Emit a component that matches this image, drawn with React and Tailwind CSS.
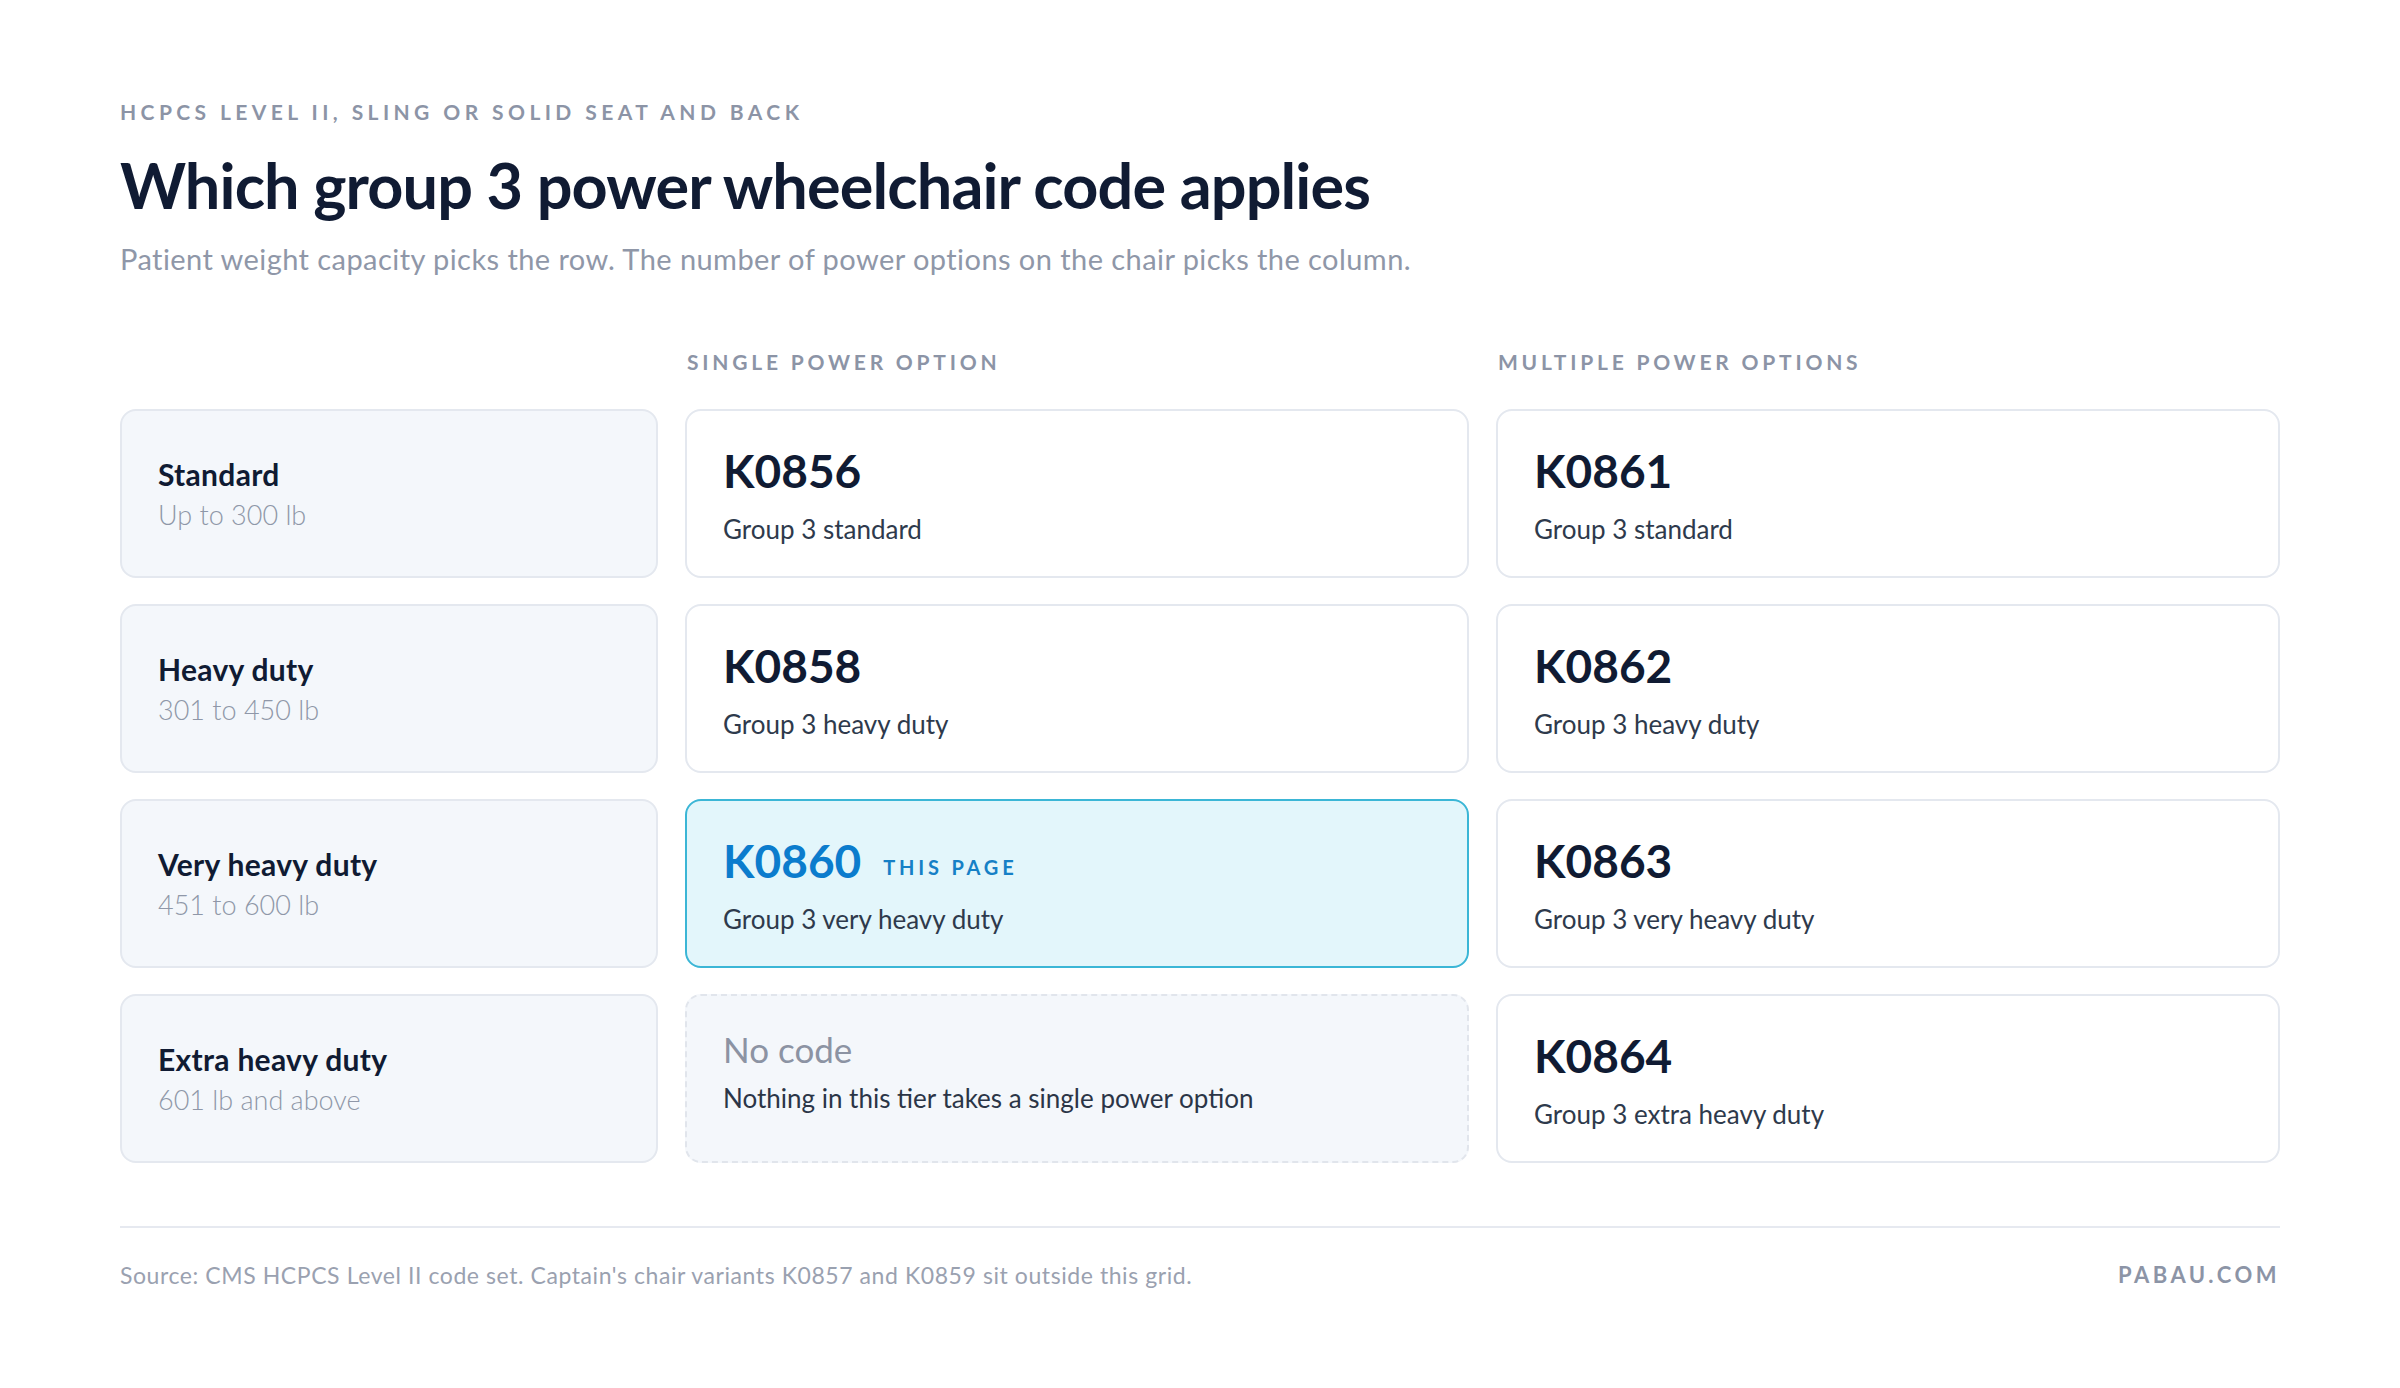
const rows = [
  {
    label: "Standard",
    range: "Up to 300 lb",
    single: { code: "K0856", desc: "Group 3 standard" },
    multi: { code: "K0861", desc: "Group 3 standard" },
  },
  {
    label: "Heavy duty",
    range: "301 to 450 lb",
    single: { code: "K0858", desc: "Group 3 heavy duty" },
    multi: { code: "K0862", desc: "Group 3 heavy duty" },
  },
  {
    label: "Very heavy duty",
    range: "451 to 600 lb",
    single: { code: "K0860", desc: "Group 3 very heavy duty", current: true },
    multi: { code: "K0863", desc: "Group 3 very heavy duty" },
  },
  {
    label: "Extra heavy duty",
    range: "601 lb and above",
    single: null,
    multi: { code: "K0864", desc: "Group 3 extra heavy duty" },
  },
];

const TierCard = ({ label, range }) => (
  <div className="h-[169px] rounded-[16px] border-2 border-[#e4e8ef] bg-[#f4f7fb] px-[36px] flex flex-col justify-center">
    <div className="text-[30px] leading-[36px] font-bold tracking-[0.01em] text-[#101b33]">{label}</div>
    <div className="mt-[6px] text-[27px] leading-[34px] text-[#8f97a8] font-light">{range}</div>
  </div>
);

const CodeCard = ({ item }) => {
  if (!item) {
    return (
      <div className="h-[169px] rounded-[16px] border-2 border-dashed border-[#e1e5ec] bg-[#f4f7fb] px-[36px] pb-[14px] flex flex-col justify-center">
        <div className="text-[35px] leading-[42px] text-[#8c93a3]">No code</div>
        <div className="mt-[11px] text-[26px] leading-[34px] text-[#2b3547]">
          Nothing in this tier takes a single power option
        </div>
      </div>
    );
  }

  if (item.current) {
    return (
      <div className="h-[169px] rounded-[16px] border-2 border-[#3bb6d6] bg-[#e3f6fb] px-[36px] pt-[4px] flex flex-col justify-center">
        <div className="flex items-baseline gap-[22px]">
          <span className="text-[46px] leading-[52px] font-bold text-[#0b7ccd]">{item.code}</span>
          <span className="-translate-y-[3px] text-[20px] font-bold tracking-[0.19em] text-[#1680c6]">THIS PAGE</span>
        </div>
        <div className="mt-[15px] text-[26px] leading-[34px] text-[#2e3a4c]">{item.desc}</div>
      </div>
    );
  }

  return (
    <div className="h-[169px] rounded-[16px] border-2 border-[#e4e8ef] bg-white px-[36px] pt-[4px] flex flex-col justify-center">
      <div className="text-[46px] leading-[52px] font-bold text-[#101b33]">{item.code}</div>
      <div className="mt-[15px] text-[26px] leading-[34px] text-[#2e3a4c]">{item.desc}</div>
    </div>
  );
};

export default function App() {
  return (
    <div
      className="min-h-[1388px] w-[2400px] bg-white px-[120px] pt-[100px]"
      style={{ fontFamily: "Lato, 'Noto Sans', sans-serif" }}
    >
      <div className="text-[21px] leading-[24px] font-bold tracking-[0.21em] text-[#8c94a6]">
        HCPCS LEVEL II, SLING OR SOLID SEAT AND BACK
      </div>
      <h1 className="mt-[25px] text-[63px] leading-[72px] font-bold tracking-[-0.014em] text-[#101b33]">
        Which group 3 power wheelchair code applies
      </h1>
      <p className="mt-[20px] text-[29px] leading-[36px] tracking-[0.015em] text-[#8f97a8]">
        Patient weight capacity picks the row. The number of power options on the chair picks the column.
      </p>

      <div className="mt-[73px] grid grid-cols-[538px_1fr_1fr] gap-x-[27px] gap-y-[26px]">
        <div />
        <div className="h-[33px] pl-[2px] text-[21px] leading-[24px] font-bold tracking-[0.18em] text-[#8c94a6]">
          SINGLE POWER OPTION
        </div>
        <div className="h-[33px] pl-[2px] text-[21px] leading-[24px] font-bold tracking-[0.18em] text-[#8c94a6]">
          MULTIPLE POWER OPTIONS
        </div>

        {rows.map((r) => (
          <div key={r.label} className="contents">
            <TierCard label={r.label} range={r.range} />
            <CodeCard item={r.single} />
            <CodeCard item={r.multi} />
          </div>
        ))}
      </div>

      <div className="mt-[63px] border-t-2 border-[#e6e9f0] pt-[33px] flex items-center justify-between">
        <div className="text-[23px] leading-[28px] tracking-[0.025em] text-[#9aa1b0]">
          Source: CMS HCPCS Level II code set. Captain's chair variants K0857 and K0859 sit outside this grid.
        </div>
        <div className="text-[22px] leading-[28px] font-bold tracking-[0.16em] text-[#8c94a6]">PABAU.COM</div>
      </div>
    </div>
  );
}
